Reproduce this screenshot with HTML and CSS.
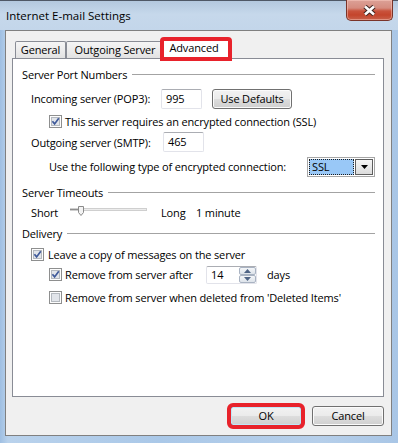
FILE: index.html
```html
<!DOCTYPE html>
<html>
<head>
<meta charset="utf-8">
<title>Internet E-mail Settings</title>
<link rel="stylesheet" href="styles.css">
</head>
<body>
<div class="window">
  <div class="titlebar">
    <span class="title">Internet E-mail Settings</span>
    <div class="close">
      <svg width="15" height="11" viewBox="0 0 15 11">
        <path d="M3 1.5 L12 9.5 M12 1.5 L3 9.5" stroke="#3d2420" stroke-width="4.6" fill="none"/>
        <path d="M3 1.5 L12 9.5 M12 1.5 L3 9.5" stroke="#ffffff" stroke-width="2.6" fill="none"/>
      </svg>
    </div>
  </div>
  <div class="client">
    <div class="tabs">
      <div class="tab tab-general">General</div>
      <div class="tab tab-outgoing">Outgoing Server</div>
      <div class="tab tab-advanced">Advanced</div>
    </div>
    <div class="panel">
      <div class="group-h">Server Port Numbers</div>
      <div class="row r-incoming">
        <span class="lbl lbl-incoming">Incoming server (POP3):</span>
        <span class="textbox">995</span>
        <button class="btn btn-defaults">Use Defaults</button>
      </div>
      <div class="row r-ssl">
        <svg class="cb" width="13" height="13" viewBox="0 0 13 13">
          <rect x="0.5" y="0.5" width="12" height="12" fill="#fdfdfd" stroke="#8e8f8f"/>
          <rect x="2.5" y="2.5" width="8" height="8" fill="#e2e5ea" stroke="#b4b9bf"/>
          <path d="M3.4 6.2 L5.6 8.9 L9.8 3.2" fill="none" stroke="#3f5a9a" stroke-width="1.7"/>
        </svg>
        <span>This server requires an encrypted connection (SSL)</span>
      </div>
      <div class="row r-outgoing">
        <span class="lbl lbl-outgoing">Outgoing server (SMTP):</span>
        <span class="textbox">465</span>
      </div>
      <div class="row r-enc">
        <span class="lbl lbl-enc">Use the following type of encrypted connection:</span>
        <div class="select">
          <span class="sel-value">SSL</span>
          <span class="sel-btn">
            <svg width="7" height="4" viewBox="0 0 7 4"><path d="M0 0 H7 L3.5 4 Z" fill="#000"/></svg>
          </span>
        </div>
      </div>
      <div class="group-h g-timeouts">Server Timeouts</div>
      <div class="row r-short">
        <span class="lbl lbl-short">Short</span>
        <svg class="slider" width="77" height="12" viewBox="0 0 77 12">
          <rect x="0.5" y="2.5" width="76" height="2" fill="#ececec" stroke="#cfcfcf"/>
          <path d="M0 3.5 H8" stroke="#8f8f8f"/>
          <path d="M8.5 0.5 H13.5 V6.5 L11 9.5 L8.5 6.5 Z" fill="#f3f3f3" stroke="#8a8a8a"/>
        </svg>
        <span class="lbl-long">Long</span>
        <span>1 minute</span>
      </div>
      <div class="group-h g-delivery">Delivery</div>
      <div class="row r-leave">
        <svg class="cb cb-wide" width="13" height="13" viewBox="0 0 13 13">
          <rect x="0.5" y="0.5" width="12" height="12" fill="#fdfdfd" stroke="#8e8f8f"/>
          <rect x="2.5" y="2.5" width="8" height="8" fill="#e2e5ea" stroke="#b4b9bf"/>
          <path d="M3.4 6.2 L5.6 8.9 L9.8 3.2" fill="none" stroke="#3f5a9a" stroke-width="1.7"/>
        </svg>
        <span>Leave a copy of messages on the server</span>
      </div>
      <div class="row r-after">
        <svg class="cb" width="13" height="13" viewBox="0 0 13 13">
          <rect x="0.5" y="0.5" width="12" height="12" fill="#fdfdfd" stroke="#8e8f8f"/>
          <rect x="2.5" y="2.5" width="8" height="8" fill="#e2e5ea" stroke="#b4b9bf"/>
          <path d="M3.4 6.2 L5.6 8.9 L9.8 3.2" fill="none" stroke="#3f5a9a" stroke-width="1.7"/>
        </svg>
        <span class="lbl lbl-after">Remove from server after</span>
        <div class="spin">
          <span class="spin-value">14</span>
          <span class="spin-btns">
            <span class="spin-btn">
              <svg width="7" height="4" viewBox="0 0 7 4"><path d="M0 4 H7 L3.5 0 Z" fill="#4e6384"/></svg>
            </span>
            <span class="spin-btn">
              <svg width="7" height="4" viewBox="0 0 7 4"><path d="M0 0 H7 L3.5 4 Z" fill="#4e6384"/></svg>
            </span>
          </span>
        </div>
        <span class="days">days</span>
      </div>
      <div class="row r-deleted">
        <svg class="cb" width="13" height="13" viewBox="0 0 13 13">
          <rect x="0.5" y="0.5" width="12" height="12" fill="#fdfdfd" stroke="#8e8f8f"/>
          <rect x="2.5" y="2.5" width="8" height="8" fill="#e2e5ea" stroke="#b4b9bf"/>
        </svg>
        <span>Remove from server when deleted from 'Deleted Items'</span>
      </div>
    </div>
    <div class="buttons">
      <button class="btn btn-ok">OK</button>
      <button class="btn btn-cancel">Cancel</button>
    </div>
  </div>
</div>
</body>
</html>
```

FILE: styles.css
```css
* { box-sizing: border-box; }
html, body { margin: 0; padding: 0; }
body {
  width: 398px;
  height: 443px;
  overflow: hidden;
  font-family: "Open Sans", "Noto Sans", sans-serif;
  font-size: 11px;
  letter-spacing: -0.15px;
  color: #000;
}
.window {
  width: 398px;
  height: 443px;
  display: flex;
  flex-direction: column;
  background: linear-gradient(to right, #9fbfe2 0%, #b9d2ec 2%, #aac8e8 40%, #b6cfea 80%, #a9c6e6 100%);
  border-top: 1px solid #4f5866;
}
.titlebar {
  height: 29px;
  flex: none;
  display: flex;
  align-items: flex-start;
  padding-left: 6px;
  background: linear-gradient(to bottom, #b3c8de 0%, #c6d8eb 45%, #c3d6ea 100%);
}
.title {
  margin-top: 7px;
  line-height: 16px;
  font-size: 11.5px;
  letter-spacing: 0;
}
.close {
  margin-left: auto;
  margin-right: 5px;
  margin-top: -1px;
  width: 47px;
  height: 21px;
  border: 1px solid #7a3429;
  border-top: none;
  border-radius: 0 0 5px 5px;
  background: linear-gradient(to bottom, #dca197 0%, #d58c7f 40%, #c9533c 55%, #c4452c 75%, #c8614b 100%);
  box-shadow: inset 0 0 0 1px rgba(255, 210, 200, 0.45);
  display: flex;
  align-items: center;
  justify-content: center;
}
.client {
  margin: 0 6px 0 5px;
  height: 406px;
  flex: none;
  border: 1px solid #808080;
  background: #f0f0f0;
  display: flex;
  flex-direction: column;
}
.tabs {
  margin: 8px 0 0 6px;
  padding-left: 3px;
  height: 19px;
  display: flex;
  align-items: flex-end;
}
.tab {
  height: 17px;
  border: 1px solid #898c95;
  border-bottom: none;
  border-radius: 2px 2px 0 0;
  background: linear-gradient(to bottom, #f5f5f5 0%, #ececec 50%, #e2e2e2 100%);
  text-align: center;
  line-height: 15px;
}
.tab-general { width: 51px; }
.tab-outgoing { width: 98px; }
.tab-advanced {
  width: 68px;
  height: 20px;
  margin-left: -2px;
  margin-bottom: -1px;
  padding-right: 4px;
  line-height: 16px;
  background: #fff;
  position: relative;
  z-index: 1;
  outline: 4px solid #e8222b;
  outline-offset: -2px;
}
.panel {
  margin-left: 6px;
  width: 372px;
  height: 339px;
  flex: none;
  border: 1px solid #898c95;
  background: #fff;
  padding: 7px 8px 0 9px;
  display: flex;
  flex-direction: column;
}
.group-h {
  display: flex;
  align-items: center;
  height: 16px;
  flex: none;
  white-space: nowrap;
}
.group-h::after {
  content: "";
  flex: 1;
  height: 1px;
  margin-left: 5px;
  background: #a3a3a3;
}
.row {
  display: flex;
  align-items: center;
  flex: none;
  white-space: nowrap;
  padding-left: 9px;
}
.lbl { flex: none; }
.r-incoming { margin-top: 6px; height: 21px; }
.r-ssl { margin-top: 4px; height: 16px; padding-left: 27px; }
.r-outgoing { margin-top: 3px; height: 20px; }
.r-enc { margin-top: 4px; height: 21px; padding-left: 27px; }
.g-timeouts { margin-top: 7px; }
.r-short { margin-top: 3px; height: 18px; }
.g-delivery { margin-top: 4px; }
.r-leave { margin-top: 5px; height: 16px; }
.r-after { margin-top: 3px; height: 19px; padding-left: 27px; }
.r-deleted { margin-top: 5px; height: 16px; padding-left: 27px; }

.lbl-incoming { width: 130px; }
.lbl-outgoing { width: 132px; }
.lbl-enc { width: 258px; }
.lbl-short { width: 39px; }
.lbl-after { width: 141px; }
.lbl-long { width: 35px; margin-left: 14px; }

.textbox {
  width: 41px;
  height: 20px;
  border: 1px solid #e2e3ea;
  border-top-color: #abadb3;
  border-radius: 2px;
  padding-left: 4px;
  line-height: 18px;
  background: #fff;
}
.cb { flex: none; margin-right: 3px; }
.cb-wide { margin-right: 4px; }

.btn {
  font-family: inherit;
  font-size: 11px;
  letter-spacing: -0.15px;
  color: #000;
  height: 20px;
  padding: 0;
  border: 1px solid #707070;
  border-radius: 3px;
  background: linear-gradient(to bottom, #f2f2f2 0%, #ebebeb 48%, #dddddd 52%, #cfcfcf 100%);
  box-shadow: inset 0 0 0 1px #fbfbfb;
  line-height: 16px;
}
.btn-defaults { width: 80px; margin-left: 10px; }
.select {
  width: 68px;
  height: 20px;
  border: 1px solid #a6a6a6;
  padding: 1px;
  display: flex;
  background: #fff;
}
.sel-value {
  flex: 1;
  background: #99c8f7;
  border: 1px dotted #1c1c1c;
  padding-left: 2px;
  line-height: 14px;
}
.sel-btn {
  width: 18px;
  border: 1px solid #5e5e5e;
  background: linear-gradient(to bottom, #f6f6f6, #dcdcdc);
  display: flex;
  align-items: center;
  justify-content: center;
  margin-left: 1px;
}
.slider { flex: none; }
.spin {
  width: 51px;
  height: 18px;
  border: 1px solid #e2e3ea;
  border-top-color: #abadb3;
  border-radius: 2px;
  background: #fff;
  display: flex;
  align-items: stretch;
}
.spin-value {
  flex: 1;
  padding-left: 4px;
  line-height: 16px;
}
.spin-btns {
  width: 17px;
  display: flex;
  flex-direction: column;
}
.spin-btn {
  flex: 1;
  border: 1px solid #a9b3c2;
  border-radius: 2px;
  background: linear-gradient(to bottom, #f4f6f9, #dde3ea);
  display: flex;
  align-items: center;
  justify-content: center;
}
.days { margin-left: 10px; }

.buttons {
  margin-top: 9px;
  display: flex;
  justify-content: flex-end;
  gap: 10px;
  padding-right: 7px;
}
.btn-ok, .btn-cancel { width: 72px; }
.btn-ok {
  border-color: #3c7fb1;
  box-shadow: inset 0 0 0 1px #bfe7f7;
  outline: 4px solid #e8222b;
  outline-offset: -1px;
}
```
